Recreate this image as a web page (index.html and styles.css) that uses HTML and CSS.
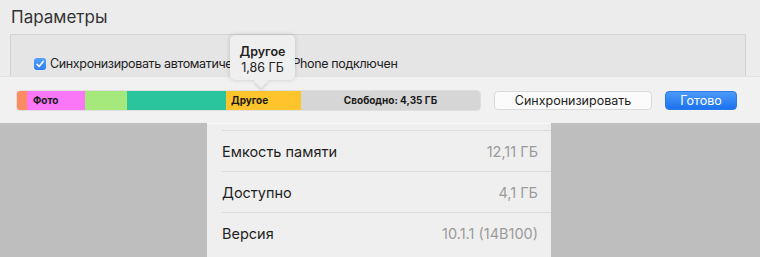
FILE: index.html
```html
<!DOCTYPE html>
<html lang="ru">
<head>
    <meta charset="UTF-8">
    <title>Параметры</title>
    <link rel="stylesheet" href="styles.css">
</head>
<body>

<section class="options">
    <h1 class="options-title">Параметры</h1>
    <div class="options-box">
        <label class="option">
            <span class="checkbox">
                <svg width="12" height="12" viewBox="0 0 12 12"><path d="M3 6.3 L5.1 8.5 L9.2 3.4" fill="none" stroke="#fff" stroke-width="1.6" stroke-linecap="round" stroke-linejoin="round"/></svg>
            </span>
            Синхронизировать автоматически, если iPhone подключен
        </label>
    </div>
</section>

<section class="toolbar">
    <div class="storage">
        <div class="seg seg-apps" style="width: 10px"></div>
        <div class="seg seg-photo" style="width: 58px">Фото</div>
        <div class="seg seg-media" style="width: 42px"></div>
        <div class="seg seg-docs" style="width: 99px"></div>
        <div class="seg seg-other" style="width: 75px">Другое</div>
        <div class="seg seg-free" style="width: 179px">Свободно: 4,35 ГБ</div>

        <div class="tooltip">
            <b>Другое</b>
            <span>1,86 ГБ</span>
        </div>
    </div>
    <button class="btn btn-sync">Синхронизировать</button>
    <button class="btn btn-done">Готово</button>
</section>

<section class="device">
    <div class="device-panel">
        <div class="row"><span>Емкость памяти</span><span class="value">12,11 ГБ</span></div>
        <div class="row"><span>Доступно</span><span class="value">4,1 ГБ</span></div>
        <div class="row"><span>Версия</span><span class="value">10.1.1 (14B100)</span></div>
    </div>
</section>

</body>
</html>
```

FILE: styles.css
```css
body {
    margin: 0;
    width: 760px;
    height: 257px;
    overflow: hidden;
    font-family: Inter, "Noto Sans", sans-serif;
    color: #1e1e1e;
    background: #bfbebe;
}

.options {
    height: 76px;
    overflow: hidden;
    padding-left: 10px;
    background: #ececec;
    box-sizing: border-box;
}

.options-title {
    margin: 0;
    padding: 7px 0 0 1px;
    height: 34px;
    box-sizing: border-box;
    font-size: 17px;
    font-weight: 400;
    color: #333;
}

.options-box {
    width: 736px;
    height: 60px;
    box-sizing: border-box;
    border: 1px solid #d2d2d2;
    background: #e5e5e5;
    padding: 21px 0 0 23px;
}

.option {
    display: flex;
    align-items: center;
    gap: 4px;
    font-size: 12.5px;
    letter-spacing: -0.35px;
    color: #222;
}

.checkbox {
    display: flex;
    width: 12px;
    height: 12px;
    border-radius: 3px;
    background: linear-gradient(#55a1f8, #2a7ff3);
}

.toolbar {
    display: flex;
    align-items: center;
    height: 47px;
    padding-left: 17px;
    background: #f1f1f1;
    border-top: 1px solid #e2e2e2;
    box-sizing: border-box;
}

.storage {
    position: relative;
    display: flex;
    height: 19px;
    border-radius: 3px;
    box-shadow: 0 0 0 0.5px rgba(0, 0, 0, 0.15);
}

.seg {
    display: flex;
    align-items: center;
    font-size: 10px;
    font-weight: 700;
    color: #1a1a1a;
    white-space: nowrap;
    overflow: hidden;
}

.seg-apps { background: #fb8c5f; border-radius: 3px 0 0 3px; }
.seg-photo { background: #fa78f7; padding-left: 6px; box-sizing: border-box; }
.seg-media { background: #a5e87c; }
.seg-docs { background: #2bc59d; }
.seg-other { background: #fdc42b; padding-left: 5px; box-sizing: border-box; }
.seg-free { background: #d6d6d6; justify-content: center; border-radius: 0 3px 3px 0; }

.tooltip {
    position: absolute;
    left: 213px;
    bottom: 30px;
    width: 65px;
    height: 45px;
    display: flex;
    flex-direction: column;
    align-items: center;
    justify-content: center;
    border-radius: 5px;
    background: #efefef;
    box-shadow: 0 0 5px rgba(0, 0, 0, 0.16);
    font-size: 12.5px;
    line-height: 16px;
    padding-top: 5px;
    box-sizing: border-box;
    color: #222;
}

.tooltip b {
    font-weight: 600;
}

.tooltip::after {
    content: "";
    position: absolute;
    left: 26px;
    bottom: -6px;
    width: 10px;
    height: 10px;
    background: #efefef;
    transform: rotate(45deg);
    box-shadow: 2px 2px 3px rgba(0, 0, 0, 0.1);
}

.btn {
    height: 19px;
    padding: 0;
    font-family: inherit;
    font-size: 12.5px;
    border-radius: 4px;
}

.btn-sync {
    width: 158px;
    margin-left: 14px;
    background: #fbfbfb;
    border: 1px solid #dadada;
    color: #222;
}

.btn-done {
    width: 72px;
    margin-left: 13px;
    background: linear-gradient(#4b9af8, #1b72ef);
    border: 1px solid #2a7be8;
    color: #fff;
}

.device {
    display: flex;
    height: 134px;
    padding-left: 207px;
}

.device-panel {
    width: 344px;
    padding: 6px 0 0 15px;
    box-sizing: border-box;
    background: #efefef;
    border-top: 1px solid #f8f8f8;
}

.row {
    display: flex;
    justify-content: space-between;
    align-items: center;
    height: 41px;
    padding-right: 13px;
    box-sizing: border-box;
    border-top: 1px solid #dcdcdc;
    font-size: 14.5px;
    color: #1e1e1e;
}

.value {
    color: #9b9b9b;
}
```
